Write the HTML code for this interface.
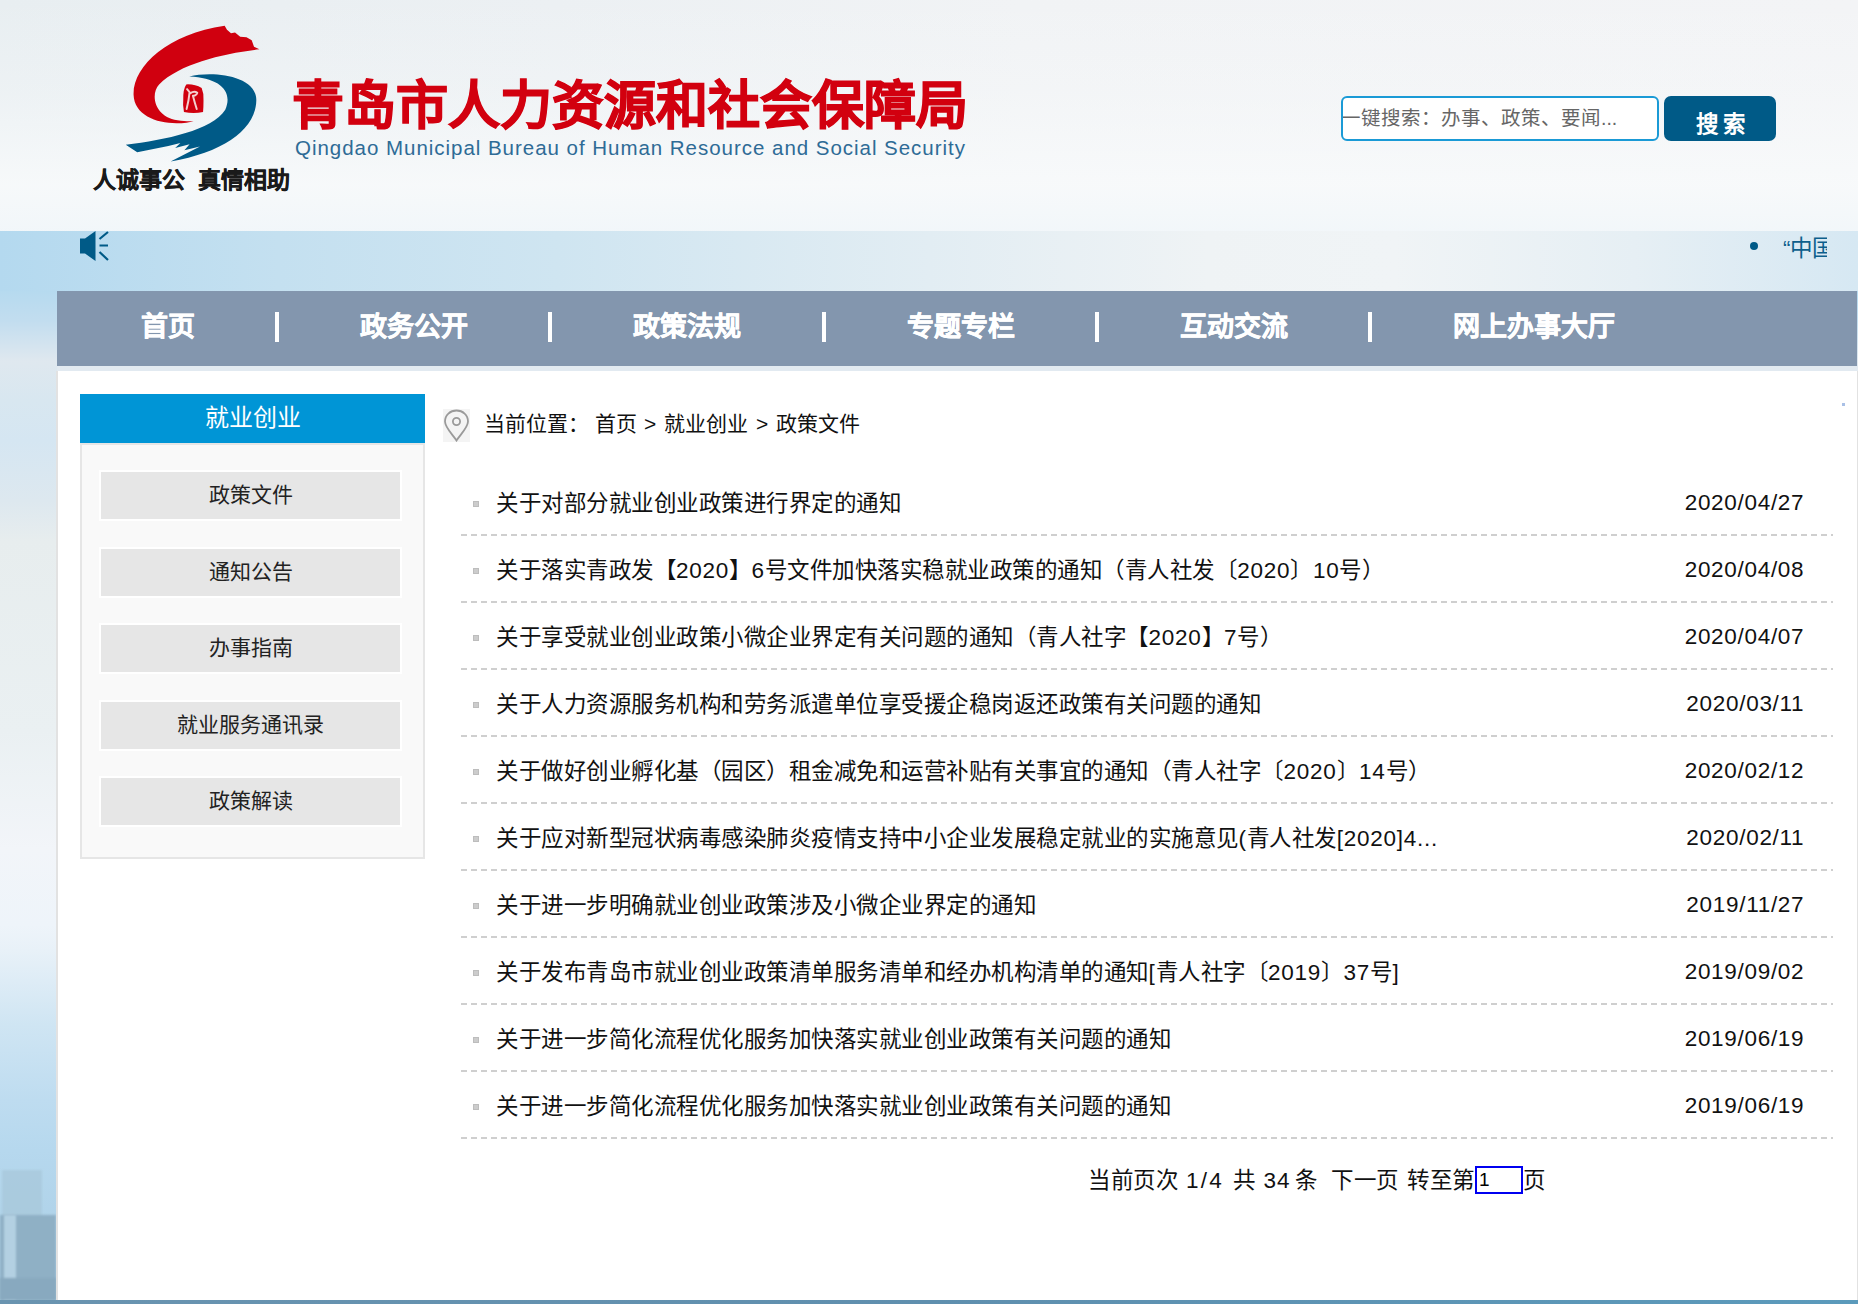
<!DOCTYPE html>
<html lang="zh-CN">
<head>
<meta charset="utf-8">
<title>青岛市人力资源和社会保障局</title>
<style>
*{margin:0;padding:0;box-sizing:border-box;}
html,body{width:1858px;height:1304px;overflow:hidden;}
body{position:relative;font-family:"Liberation Sans",sans-serif;color:#000;background:#d6e7f2;}
.abs{position:absolute;}
b{font-weight:normal;}
#hdr{left:0;top:0;width:1858px;height:231px;background:linear-gradient(180deg,rgba(248,250,251,0) 0%,rgba(248,250,251,0.3) 40%,rgba(248,250,251,0.9) 80%,rgba(242,247,250,0.95) 100%),linear-gradient(90deg,#e8eef1 0%,#ecf0f3 30%,#f1f3f5 55%,#f3f4f6 100%);}
#sky{left:0;top:231px;width:1858px;height:1073px;background:linear-gradient(180deg,#b4d9ef 0px,#b6daef 60px,#c2ddef 90px,#dfe8ef 130px,#d8e7f0 170px,#d5e6f2 210px,#dde8ef 270px,#e7edee 310px,#eaf0f2 500px,#f2f5f9 619px,#eef4fa 694px,#e8f1f8 719px,#cfe5f3 794px,#bedcf0 869px,#b6d8ee 919px,#a9cde4 1073px);}
#band{left:0;top:231px;width:1858px;height:60px;background:linear-gradient(90deg,#b4d9ef 0%,#c4e0f0 15%,#cfe5f1 30%,#e2edf3 50%,#eff3f5 65%,#f0f4f6 75%,#e6eff4 88%,#d6e8f3 100%);}
.bld{position:absolute;filter:blur(1.2px);}
#nav{left:57px;top:291px;width:1800px;height:75px;background:#8396ae;}
#strip{left:57px;top:366px;width:1801px;height:5px;background:#e2eaf1;}
#content{left:56px;top:371px;width:1802px;height:929px;background:#fff;border-left:2px solid #e2e2e2;border-right:1px solid #e2e2e2;}
#bottom{left:0;top:1300px;width:1858px;height:4px;background:linear-gradient(90deg,#6a94b0,#5f8fae 50%,#5b9abb);}
.navt{top:290px;height:75px;line-height:75px;color:#fff;font-weight:bold;font-size:27px;white-space:nowrap;-webkit-text-stroke:0.5px #fff;}
.sep{top:312px;width:4px;height:30px;background:#fff;}
.side{left:99px;width:303px;height:51px;border:2px solid #fff;background:#e6e6e6;text-align:center;font-size:21px;line-height:45px;color:#222;}
.crumb{font-size:21px;line-height:30px;white-space:nowrap;color:#111;top:409px;}
.row{left:461px;width:1372px;height:67px;background:repeating-linear-gradient(90deg,#cfcfcf 0,#cfcfcf 6px,transparent 6px,transparent 10px) 0 65px/100% 2px no-repeat;}
.row i{position:absolute;left:12px;top:32px;width:6px;height:6px;background:#cccccc;border:1px solid #bdbdbd;}
.row .t{position:absolute;left:35px;top:19px;font-size:22.5px;line-height:32px;white-space:nowrap;color:#111;letter-spacing:-0.5px;}
.row .t .n{letter-spacing:0.75px;}
.row .d{position:absolute;right:28.7px;top:18px;font-size:22.5px;line-height:32px;white-space:nowrap;color:#111;letter-spacing:0.7px;}
.pg{font-size:22.5px;line-height:32px;white-space:nowrap;color:#111;top:1165px;letter-spacing:-0.5px;}
.pg.n{letter-spacing:0.4px;}
</style>
</head>
<body>
<div id="hdr" class="abs"></div>
<div id="sky" class="abs"></div>
<div id="band" class="abs"></div>
<div class="bld" style="left:2px;top:1170px;width:40px;height:130px;background:#a9c9dc;opacity:.8"></div>
<div class="bld" style="left:0;top:1215px;width:56px;height:85px;background:#8fb0c5"></div>
<div class="bld" style="left:4px;top:1215px;width:12px;height:85px;background:#b3d0e2"></div>
<div class="bld" style="left:0;top:1278px;width:56px;height:22px;background:#88a9bf"></div>

<div id="nav" class="abs"></div>
<div id="strip" class="abs"></div>
<div id="content" class="abs"></div>
<div id="bottom" class="abs"></div>

<!-- HEADER -->
<svg class="abs" style="left:120px;top:20px" width="150" height="150" viewBox="0 0 1304 1304">
<path fill="#d0000f" d="M660 875 C450 935,125 880,118 650 C110 400,420 120,910 50 L930 85 L965 115 L1000 108 L1045 145 L1100 150 L1145 175 L1165 232 L1212 255 C900 290,520 380,340 560 C265 640,290 840,500 872 C580 884,640 882,660 875 Z"/>
<path fill="#005a87" d="M602 492 C800 440,1190 480,1185 700 C1180 950,900 1150,440 1230 L695 1100 L560 1132 L605 1080 L480 1112 L525 1070 L420 1095 L150 1150 L50 1085 C400 1040,800 960,915 780 C985 620,870 505,602 492 Z"/>
<path fill="#d0000f" d="M576 560 Q650 556 710 592 Q730 640 726 700 Q726 760 722 800 Q640 816 556 800 Q544 740 550 690 Q548 600 576 560 Z"/>
<path fill="none" stroke="#f4d0d0" stroke-width="17" stroke-linecap="round" stroke-linejoin="round" d="M583 601 L603 624 M605 627 Q598 700 579 774 M612 636 Q645 612 672 632 Q665 655 636 660 M634 658 Q650 720 667 774"/>
</svg>
<div class="abs" style="left:93px;top:165px;font-size:23px;font-weight:bold;color:#1a1a1a;-webkit-text-stroke:0.3px #1a1a1a;white-space:nowrap;line-height:30px">人诚事公&nbsp;&nbsp;真情相助</div>
<div class="abs" style="left:292px;top:73px;font-size:52px;font-weight:bold;color:#d2000f;-webkit-text-stroke:1.2px #d2000f;white-space:nowrap;line-height:66px">青岛市人力资源和社会保障局</div>
<div class="abs" style="left:295px;top:134px;font-size:20.5px;letter-spacing:0.97px;color:#2e6b96;white-space:nowrap;line-height:28px">Qingdao Municipal Bureau of Human Resource and Social Security</div>

<div class="abs" style="left:1341px;top:96px;width:318px;height:45px;background:#fff;border:2px solid #1a9ad6;border-radius:6px;overflow:hidden">
  <div style="position:absolute;left:-2px;top:0;line-height:41px;font-size:19.5px;color:#666;white-space:nowrap;letter-spacing:0px">一键搜索：办事、政策、要闻...</div>
</div>
<div class="abs" style="left:1664px;top:96px;width:112px;height:45px;background:#005a87;border-radius:7px;"></div>
<div class="abs" style="left:1696px;top:107px;font-weight:bold;font-size:22.5px;line-height:36px;letter-spacing:4px;color:#fff;white-space:nowrap">搜索</div>

<svg class="abs" style="left:78px;top:229px" width="34" height="34" viewBox="0 0 34 34">
<path fill="#005a87" d="M2 9.5 L7 9.5 L17.5 2 L17.5 32 L7 24.5 L2 24.5 Z"/>
<path stroke="#005a87" stroke-width="2.2" fill="none" d="M21.5 10 L30 3 M21.5 16.5 L30 16.5 M21.5 23 L30 31"/>
</svg>
<div class="abs" style="left:1750px;top:242px;width:8px;height:8px;border-radius:50%;background:#005a87"></div>
<div class="abs" style="left:1783px;top:231.5px;width:44px;height:34px;overflow:hidden;white-space:nowrap;font-size:22.5px;line-height:34px;color:#0d5f8c;letter-spacing:-0.5px">“中国</div>

<!-- NAV -->
<div class="abs navt" style="left:141px">首页</div>
<div class="abs sep" style="left:275px"></div>
<div class="abs navt" style="left:360px">政务公开</div>
<div class="abs sep" style="left:548px"></div>
<div class="abs navt" style="left:633px">政策法规</div>
<div class="abs sep" style="left:822px"></div>
<div class="abs navt" style="left:907px">专题专栏</div>
<div class="abs sep" style="left:1095px"></div>
<div class="abs navt" style="left:1180px">互动交流</div>
<div class="abs sep" style="left:1368px"></div>
<div class="abs navt" style="left:1453px">网上办事大厅</div>

<!-- CONTENT -->
<div class="abs" style="left:1842px;top:403px;width:3px;height:3px;background:#a9c0e6"></div>
<div class="abs" style="left:80px;top:394px;width:345px;height:49px;background:#0095d6;color:#fff;font-size:24px;text-align:center;line-height:48px">就业创业</div>
<div class="abs" style="left:80px;top:443px;width:345px;height:416px;background:#f9f9f9;border:2px solid #e6e6e6"></div>
<div class="abs side" style="top:470px">政策文件</div>
<div class="abs side" style="top:546.5px">通知公告</div>
<div class="abs side" style="top:623px">办事指南</div>
<div class="abs side" style="top:699.5px">就业服务通讯录</div>
<div class="abs side" style="top:776px">政策解读</div>

<div class="abs" style="left:443px;top:409px;width:27px;height:33px;background:#f4f4f4"></div>
<svg class="abs" style="left:443px;top:409px" width="27" height="33" viewBox="0 0 27 33">
<path fill="none" stroke="#9a9a9a" stroke-width="1.8" d="M13.5 31.5 C10 26,2 18.5,2 12.5 C2 6,7.2 1.5,13.5 1.5 C19.8 1.5,25 6,25 12.5 C25 18.5,17 26,13.5 31.5 Z"/>
<circle cx="13.5" cy="12.5" r="3.6" fill="none" stroke="#9a9a9a" stroke-width="1.8"/>
</svg>
<div class="abs crumb" style="left:484px">当前位置：</div>
<div class="abs crumb" style="left:595px">首页</div>
<div class="abs crumb" style="left:644px">&gt;</div>
<div class="abs crumb" style="left:664px">就业创业</div>
<div class="abs crumb" style="left:756px">&gt;</div>
<div class="abs crumb" style="left:776px">政策文件</div>

<div class="abs row" style="top:469px"><i></i><span class="t">关于对部分就业创业政策进行界定的通知</span><span class="d">2020/04/27</span></div>
<div class="abs row" style="top:536px"><i></i><span class="t">关于落实青政发【<b class="n">2020</b>】<b class="n">6</b>号文件加快落实稳就业政策的通知（青人社发〔<b class="n">2020</b>〕<b class="n">10</b>号）</span><span class="d">2020/04/08</span></div>
<div class="abs row" style="top:603px"><i></i><span class="t">关于享受就业创业政策小微企业界定有关问题的通知（青人社字【<b class="n">2020</b>】<b class="n">7</b>号）</span><span class="d">2020/04/07</span></div>
<div class="abs row" style="top:670px"><i></i><span class="t">关于人力资源服务机构和劳务派遣单位享受援企稳岗返还政策有关问题的通知</span><span class="d">2020/03/11</span></div>
<div class="abs row" style="top:737px"><i></i><span class="t">关于做好创业孵化基（园区）租金减免和运营补贴有关事宜的通知（青人社字〔<b class="n">2020</b>〕<b class="n">14</b>号）</span><span class="d">2020/02/12</span></div>
<div class="abs row" style="top:804px"><i></i><span class="t">关于应对新型冠状病毒感染肺炎疫情支持中小企业发展稳定就业的实施意见<b class="n">(</b>青人社发<b class="n">[2020]4...</b></span><span class="d">2020/02/11</span></div>
<div class="abs row" style="top:871px"><i></i><span class="t">关于进一步明确就业创业政策涉及小微企业界定的通知</span><span class="d">2019/11/27</span></div>
<div class="abs row" style="top:938px"><i></i><span class="t">关于发布青岛市就业创业政策清单服务清单和经办机构清单的通知<b class="n">[</b>青人社字〔<b class="n">2019</b>〕<b class="n">37</b>号<b class="n">]</b></span><span class="d">2019/09/02</span></div>
<div class="abs row" style="top:1005px"><i></i><span class="t">关于进一步简化流程优化服务加快落实就业创业政策有关问题的通知</span><span class="d">2019/06/19</span></div>
<div class="abs row" style="top:1072px"><i></i><span class="t">关于进一步简化流程优化服务加快落实就业创业政策有关问题的通知</span><span class="d">2019/06/19</span></div>

<div class="abs pg" style="left:1088px">当前页次</div>
<div class="abs pg n" style="left:1186px;letter-spacing:2.3px">1/4</div>
<div class="abs pg" style="left:1233px">共</div>
<div class="abs pg n" style="left:1263.5px;letter-spacing:1px">34</div>
<div class="abs pg" style="left:1295px">条</div>
<div class="abs pg" style="left:1331px">下一页</div>
<div class="abs pg" style="left:1407px">转至第</div>
<div class="abs" style="left:1475px;top:1166px;width:48px;height:28px;border:2px solid #0000f0;background:#fff;font-size:19px;line-height:24px;padding-left:2px">1</div>
<div class="abs pg" style="left:1523px">页</div>

</body>
</html>
